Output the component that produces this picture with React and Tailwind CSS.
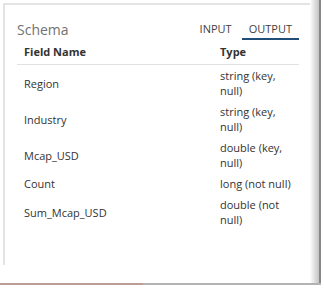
const rows = [
  { name: 'Region', type: ['string (key,', 'null)'] },
  { name: 'Industry', type: ['string (key,', 'null)'] },
  { name: 'Mcap_USD', type: ['double (key,', 'null)'] },
  { name: 'Count', type: ['long (not null)'] },
  { name: 'Sum_Mcap_USD', type: ['double (not', 'null)'] },
];

const App = () => {
  return (
    <div className="w-[324px] h-[288px] bg-white flex flex-col overflow-hidden" style={{ fontFamily: '"Open Sans", "Noto Sans", sans-serif' }}>
      <div className="flex h-[283px]">
        <div className="w-[310px] pl-[3px] pt-[3px]">
          {/* Schema panel */}
          <div className="h-[262px] border-l-2 border-t-2 border-[#e4e4e4] pl-[12px] pr-[11px]">
            <div className="flex items-end justify-between h-[35px]">
              <span className="text-[14px] leading-[18px] text-[#727272] pb-[1px]">Schema</span>
              <div className="flex items-end gap-[6px] text-[11px] leading-[15px] text-[#3f3f3f]">
                <span className="px-[4px] pb-[4px]">INPUT</span>
                <span className="px-[7px] pb-[2px] border-b-2 border-[#1f4e79]">OUTPUT</span>
              </div>
            </div>

            <div className="flex h-[25px] items-center border-b border-[#e2e2e2] text-[11px] font-bold text-[#333]">
              <div className="w-[196px] pl-[7px]">Field Name</div>
              <div className="pl-[7px]">Type</div>
            </div>

            {rows.map((r) => (
              <div key={r.name} className="flex items-center py-[3px] text-[11px] leading-[15px] text-[#333]">
                <div className="w-[196px] pl-[7px]">{r.name}</div>
                <div className="pl-[7px]">
                  {r.type.map((t) => (
                    <div key={t}>{t}</div>
                  ))}
                </div>
              </div>
            ))}
          </div>
        </div>
        <div className="w-[9px] bg-gradient-to-r from-white to-[#c4c4c4]" />
        <div className="w-[2px] bg-[#888]" />
      </div>
      <div className="flex h-[2px]">
        <div className="w-[143px] bg-[#bc9d93]" />
        <div className="w-[178px] bg-[#b3b3b3]" />
      </div>
    </div>
  );
};

export default App;
